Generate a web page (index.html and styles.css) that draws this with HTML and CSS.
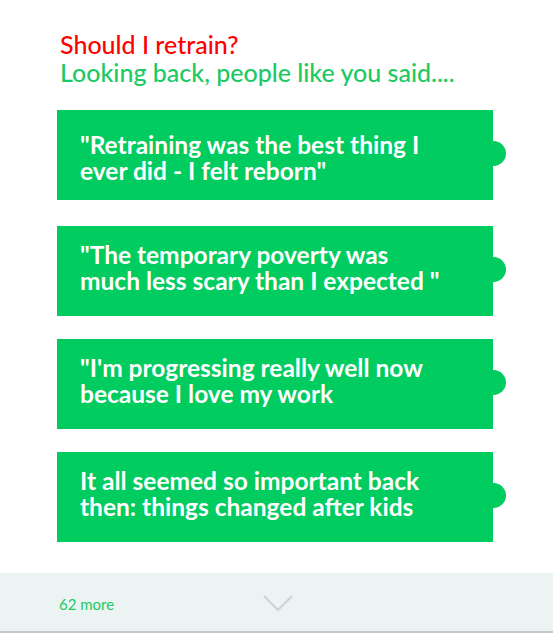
FILE: index.html
```html
<!DOCTYPE html>
<html>
<head>
<meta charset="utf-8">
<link rel="stylesheet" href="styles.css">
</head>
<body>
<div class="page">
  <div class="header">
    <div class="title">Should I retrain?</div>
    <div class="subtitle">Looking back, people like you said....</div>
  </div>
  <div class="cards">
    <div class="card first">"Retraining was the best thing I ever did - I felt reborn"</div>
    <div class="card">"The temporary poverty was much less scary than I expected "</div>
    <div class="card">"I'm progressing really well now because I love my work</div>
    <div class="card">It all seemed so important back then: things changed after kids</div>
  </div>
  <div class="footer">
    <span class="more">62 more</span>
    <svg class="chev" width="30" height="17" viewBox="0 0 30 17"><path d="M1 1 L15 15 L29 1" fill="none" stroke="#cfd3d3" stroke-width="2.2"/></svg>
  </div>
</div>
</body>
</html>
```
FILE: styles.css
```css
html, body { margin: 0; padding: 0; background: #fff; }
body { font-family: Lato, "Open Sans", sans-serif; }
.page { width: 553px; height: 634px; display: flex; flex-direction: column; }
.header { padding: 30px 0 0 60px; font-size: 25px; line-height: 28px; font-weight: 500; }
.title { color: #ff0000; }
.subtitle { color: #1dc964; }
.cards { display: flex; flex-direction: column; gap: 23px; padding: 24px 0 0 57px; }
.card {
  position: relative;
  width: 436px; height: 90px; box-sizing: border-box;
  background: #00cc5f; color: #fff;
  font-weight: bold; font-size: 24.5px; line-height: 26px;
  padding: 16px 50px 0 23px;
}
.card.first { margin-bottom: 3px; padding-top: 22px; }
.card::after {
  content: ""; position: absolute; right: -13px; top: 31px;
  width: 25px; height: 25px; border-radius: 50%; background: #00cc5f;
}
.footer {
  margin-top: 31px; height: 58px; background: #ebf4f3;
  border-bottom: 2px solid #c4c8c8;
  display: flex; align-items: center; position: relative;
}
.more { color: #1dc964; font-size: 15px; margin-left: 59px; padding-top: 4px; }
.chev { position: absolute; left: 263px; top: 22px; }
```
